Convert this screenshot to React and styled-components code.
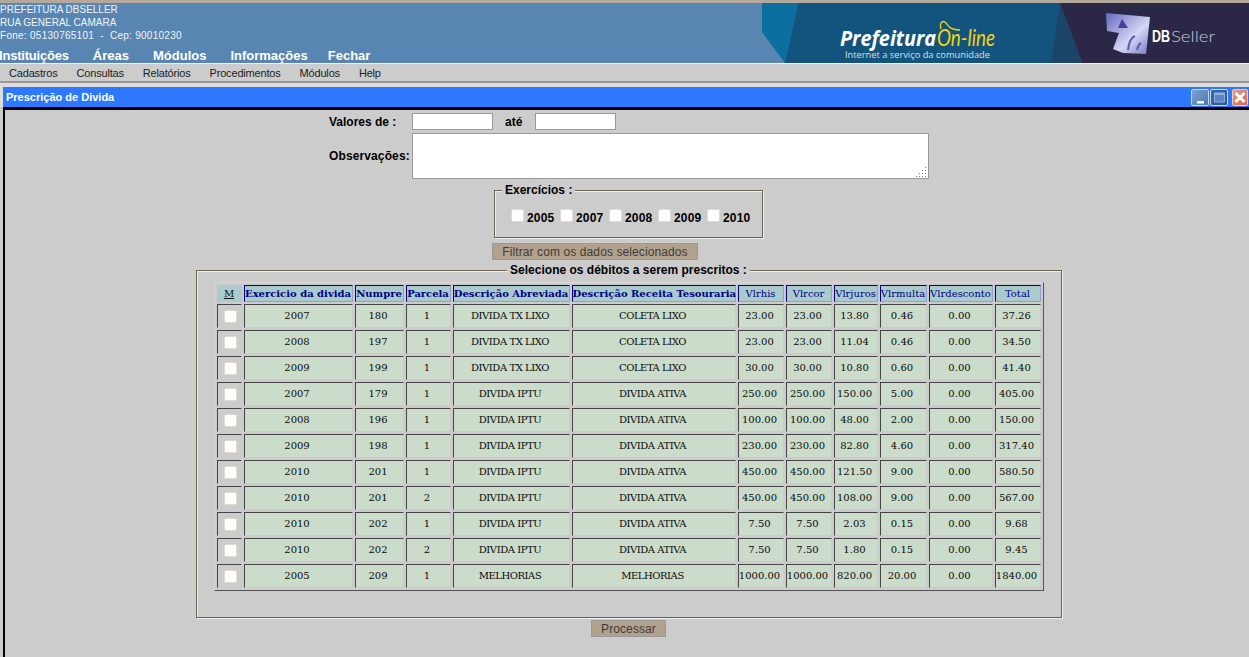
import React from "react";
import styled, { createGlobalStyle } from "styled-components";

const GlobalStyle = createGlobalStyle`
  html, body {
    margin: 0;
    height: 100%;
    overflow: hidden;
    background-color: #cccccc;
    font-family: "Liberation Sans", Arial, sans-serif;
  }
`;

const Page = styled.div`
  width: 1249px;
  height: 657px;
  overflow: hidden;
  display: flex;
  flex-direction: column;
`;

const Header = styled.header`
  height: 60px;
  flex: none;
  display: flex;
  justify-content: space-between;
  border-top: 3px solid #b3a89b;
  border-bottom: 1px solid #f2f2f2;
  background-color: #5885b1;
`;

const HeaderInfo = styled.div`
  display: flex;
  flex-direction: column;
  color: #f1f5f9;
  font-size: 10px;
  line-height: 13px;
  white-space: pre;
`;

const InfoLines = styled.div`
  height: 45px;
`;

const PhoneLine = styled.div`
  letter-spacing: 0.27px;
`;

const MainNav = styled.nav`
  display: flex;
  gap: 24px;
  margin-left: -1px;
  color: #ffffff;
  font-size: 13px;
  font-weight: bold;
  line-height: 15px;
`;

const MainItem = styled.span`
  letter-spacing: ${(p) => (p.$tight ? "-0.2px" : "0")};
  margin-left: ${(p) => (p.$pull ? "-4px" : "0")};
`;

const Banner = styled.svg`
  display: block;
  flex: none;
  width: 487px;
  height: 60px;
`;

const SubNav = styled.nav`
  height: 17px;
  flex: none;
  display: flex;
  gap: 19px;
  padding-left: 9px;
  align-items: center;
  font-size: 11px;
  letter-spacing: -0.18px;
  color: #1c1c1c;
  background-color: #cccccc;
  border-bottom: 2px solid #999999;
`;

const LightStrip = styled.div`
  height: 4px;
  flex: none;
  background-color: #dcdcdc;
`;

const Win = styled.section`
  flex: 1;
  min-height: 0;
  display: flex;
  flex-direction: column;
  padding-left: 3px;
  background: linear-gradient(#dcdcdc 0, #dcdcdc 20px, #cccccc 20px);
`;

const TitleBar = styled.div`
  height: 20px;
  flex: none;
  display: flex;
  align-items: center;
  justify-content: space-between;
  padding: 0 1px 0 3px;
  background-color: #2e78ff;
  color: #ffffff;
  font-size: 11px;
  font-weight: bold;
`;

const WinControls = styled.div`
  display: flex;
  gap: 1px;
`;

const WinControl = styled.span`
  box-sizing: border-box;
  width: ${(p) => (p.$kind === "close" ? 16 : 18)}px;
  height: 17px;
  margin-left: ${(p) => (p.$kind === "close" ? 3 : 0)}px;
  display: flex;
  align-items: center;
  justify-content: center;
  border: 1px solid ${(p) => (p.$kind === "close" ? "#f4c8b8" : "#c4d6f0")};
  border-radius: 2px;
  background: ${(p) =>
    p.$kind === "close"
      ? "linear-gradient(135deg, #e89a80, #d86a48)"
      : p.$kind === "max"
      ? "linear-gradient(135deg, #3a6cae, #2a5696)"
      : "linear-gradient(135deg, #7ea2d2, #4c78b0)"};
`;

const Panel = styled.div`
  flex: 1;
  width: 1247px;
  border-top: 3px solid #000000;
  border-left: 2px solid #000000;
  display: flex;
  flex-direction: column;
  align-items: center;
  background-color: #cccccc;
`;

const Form = styled.form`
  width: 601px;
  display: flex;
  flex-direction: column;
  padding-top: 3px;
`;

const FieldRow = styled.div`
  display: flex;
  align-items: center;
  margin-bottom: 3px;
`;

const FieldLabel = styled.label`
  box-sizing: border-box;
  width: ${(p) => p.$width}px;
  padding-left: ${(p) => p.$indent}px;
  flex: none;
  font-size: 12px;
  font-weight: bold;
  letter-spacing: ${(p) => (p.$spread ? "0.12px" : "0")};
  color: #000000;
`;

const TextField = styled.input`
  width: 81px;
  height: 17px;
  box-sizing: border-box;
  border: 1px solid #999999;
  background-color: #ffffff;
  padding: 0;
  margin: 0;
`;

const ObsWrap = styled.div`
  position: relative;
  width: 517px;
  height: 46px;
`;

const ObsArea = styled.textarea`
  display: block;
  width: 100%;
  height: 100%;
  box-sizing: border-box;
  border: 1px solid #999999;
  background-color: #ffffff;
  padding: 0;
  margin: 0;
  resize: none;
`;

const Grip = styled.svg`
  position: absolute;
  right: 2px;
  bottom: 2px;
  width: 11px;
  height: 11px;
`;

const Group = styled.fieldset`
  box-sizing: border-box;
  margin: ${(p) => p.$margin};
  width: ${(p) => p.$width}px;
  height: ${(p) => p.$height}px;
  border: 1px solid #6a6252;
  box-shadow: inset 1px 1px 0 #eeeeee, 1px 1px 0 #eeeeee;
  padding: 0;
`;

const GroupTitle = styled.legend`
  font-size: 12px;
  font-weight: bold;
  line-height: 15px;
  color: #000000;
  background-color: #cccccc;
  padding: 0 3px;
  margin: ${(p) => p.$margin};
`;

const YearRow = styled.div`
  display: flex;
  padding: 11px 0 0 16px;
`;

const YearItem = styled.label`
  width: 49px;
  display: flex;
  align-items: flex-end;
  font-size: 12px;
  font-weight: bold;
  line-height: 14px;
  letter-spacing: 0.2px;
  color: #000000;
`;

const Check = styled.input.attrs({ type: "checkbox" })`
  appearance: none;
  width: 13px;
  height: 13px;
  box-sizing: border-box;
  margin: 0;
  background-color: #ffffff;
  border: 1px solid #e0dcd2;
  border-radius: 2px;
`;

const YearCheck = styled(Check)`
  margin: 0 3px 3px 0;
`;

const ActionButton = styled.button`
  box-sizing: border-box;
  width: ${(p) => p.$width}px;
  height: 17px;
  flex: none;
  padding: 1px 0 0;
  border: 1px solid #999999;
  background-color: #b2a18c;
  color: #3d3d3d;
  font-family: "Liberation Sans", Arial, sans-serif;
  font-size: 12px;
  line-height: 14px;
  letter-spacing: 0.1px;
`;

const FilterButton = styled(ActionButton)`
  margin: 5px 0 0 164px;
`;

const DebtsBody = styled.div`
  padding: 4px 17px 0;
`;

const DebtTable = styled.table`
  table-layout: fixed;
  width: 830px;
  box-sizing: border-box;
  border-collapse: separate;
  border-spacing: 2px;
  border-style: solid;
  border-width: 1px;
  border-color: #d8d8d8 #555555 #555555 #d8d8d8;
  font-family: "DejaVu Serif", "Liberation Serif", serif;
  font-size: 10px;
`;

const HeadCell = styled.th`
  box-sizing: border-box;
  height: 17px;
  padding: 0;
  white-space: nowrap;
  text-align: center;
  background-color: #a9cbcd;
  color: ${(p) => (p.$mark ? "#111111" : "#000080")};
  font-weight: ${(p) => (p.$bold ? "bold" : "normal")};
  text-decoration: ${(p) => (p.$mark ? "underline" : "none")};
  border-style: solid;
  border-width: 1px;
  border-color: ${(p) =>
    p.$mark ? "#a9cbcd" : "#000080 #9a9ad6 #9a9ad6 #000080"};
`;

const DataCell = styled.td`
  box-sizing: border-box;
  height: 24px;
  padding: ${(p) => (p.$mark ? "0" : "0 2px 2px 0")};
  white-space: nowrap;
  text-align: center;
  color: #0a0a0a;
  letter-spacing: ${(p) => (p.$caps ? "-0.45px" : "0")};
  background-color: ${(p) => (p.$mark ? "#cccccc" : "#cbdccb")};
  border-style: solid;
  border-width: 1px;
  border-color: #444444 #cccccc #cccccc #444444;
`;

const MarkCheck = styled(Check)`
  display: block;
  margin: 0 0 0 6px;
`;

const ProcessButton = styled(ActionButton)`
  margin-top: 2px;
`;

const COLS = [25, 109, 49, 45, 117, 164, 46, 46, 44, 47, 64, 46];

const HEADS = [
  { label: "Exercicio da divida", bold: true },
  { label: "Numpre", bold: true },
  { label: "Parcela", bold: true },
  { label: "Descrição Abreviada", bold: true },
  { label: "Descrição Receita Tesouraria", bold: true },
  { label: "Vlrhis" },
  { label: "Vlrcor" },
  { label: "Vlrjuros" },
  { label: "Vlrmulta" },
  { label: "Vlrdesconto" },
  { label: "Total" },
];

const LIXO = ["DIVIDA TX LIXO", "COLETA LIXO"];
const IPTU = ["DIVIDA IPTU", "DIVIDA ATIVA"];
const MELH = ["MELHORIAS", "MELHORIAS"];

const ROWS = [
  ["2007", "180", "1", ...LIXO, "23.00", "23.00", "13.80", "0.46", "0.00", "37.26"],
  ["2008", "197", "1", ...LIXO, "23.00", "23.00", "11.04", "0.46", "0.00", "34.50"],
  ["2009", "199", "1", ...LIXO, "30.00", "30.00", "10.80", "0.60", "0.00", "41.40"],
  ["2007", "179", "1", ...IPTU, "250.00", "250.00", "150.00", "5.00", "0.00", "405.00"],
  ["2008", "196", "1", ...IPTU, "100.00", "100.00", "48.00", "2.00", "0.00", "150.00"],
  ["2009", "198", "1", ...IPTU, "230.00", "230.00", "82.80", "4.60", "0.00", "317.40"],
  ["2010", "201", "1", ...IPTU, "450.00", "450.00", "121.50", "9.00", "0.00", "580.50"],
  ["2010", "201", "2", ...IPTU, "450.00", "450.00", "108.00", "9.00", "0.00", "567.00"],
  ["2010", "202", "1", ...IPTU, "7.50", "7.50", "2.03", "0.15", "0.00", "9.68"],
  ["2010", "202", "2", ...IPTU, "7.50", "7.50", "1.80", "0.15", "0.00", "9.45"],
  ["2005", "209", "1", ...MELH, "1000.00", "1000.00", "820.00", "20.00", "0.00", "1840.00"],
];

const YEARS = ["2005", "2007", "2008", "2009", "2010"];

const BannerArt = () => (
  <Banner viewBox="762 3 487 60">
    <defs>
      <linearGradient id="cube" x1="0" y1="0" x2="1" y2="1">
        <stop offset="0" stopColor="#6466bc" />
        <stop offset="0.6" stopColor="#d5d7f4" />
        <stop offset="1" stopColor="#7478c4" />
      </linearGradient>
      <filter id="soft">
        <feGaussianBlur stdDeviation="0.7" />
      </filter>
    </defs>
    <polygon points="762,3 798,3 785,63 762,32" fill="#0a6f9f" />
    <polygon points="798,3 1060,3 1082,63 785,63" fill="#13547e" />
    <polygon points="1060,3 1082,63 1051,63" fill="#1a4468" />
    <polygon points="1060,3 1249,3 1249,63 1082,63" fill="#2a2846" />
    <text x="840" y="46" fill="#ffffff" fontFamily="'Open Sans', sans-serif" fontSize="21" fontWeight="bold" fontStyle="italic" textLength="96" lengthAdjust="spacingAndGlyphs">Prefeitura</text>
    <text x="937" y="46" fill="#f2d40a" fontFamily="Lato, sans-serif" fontSize="24" fontStyle="italic" textLength="58" lengthAdjust="spacingAndGlyphs">On-line</text>
    <path d="M941 29 C939 22 943 20 946 23 C949 27 951 30 960 30" fill="none" stroke="#f2d40a" strokeWidth="1.3" />
    <text x="845" y="58" fill="#d5e0e8" fontFamily="'Open Sans', sans-serif" fontSize="9.5" textLength="145" lengthAdjust="spacingAndGlyphs">Internet a serviço da comunidade</text>
    <g filter="url(#soft)">
      <path d="M1106 13 L1150 17 L1146 54 L1123 53 L1113 49 L1119 33 L1107 31 Z" fill="url(#cube)" />
      <path d="M1122 19 L1128 28 L1118 28 Z" fill="#4a3f96" />
      <path d="M1128 50 C1129 42 1132 37 1135 36 M1137 50 C1138 46 1139 44 1141 43" fill="none" stroke="#5a5aa8" strokeWidth="2" />
    </g>
    <text x="1152" y="42" fill="#ffffff" fontFamily="'Liberation Sans', sans-serif" fontSize="16" fontWeight="bold" textLength="18" lengthAdjust="spacingAndGlyphs">DB</text>
    <text x="1171" y="42" fill="#c9c9d6" fontFamily="Lato, sans-serif" fontSize="16" fontWeight="300" textLength="44" lengthAdjust="spacingAndGlyphs">Seller</text>
  </Banner>
);

const App = () => (
  <Page>
    <GlobalStyle />
    <Header>
      <HeaderInfo>
        <InfoLines>
          <div>PREFEITURA DBSELLER</div>
          <div>RUA GENERAL CAMARA</div>
          <PhoneLine>{"Fone: 05130765101  -  Cep: 90010230"}</PhoneLine>
        </InfoLines>
        <MainNav>
          <MainItem $tight>Instituições</MainItem>
          <MainItem>Áreas</MainItem>
          <MainItem>Módulos</MainItem>
          <MainItem>Informações</MainItem>
          <MainItem $pull>Fechar</MainItem>
        </MainNav>
      </HeaderInfo>
      <BannerArt />
    </Header>
    <SubNav>
      <span>Cadastros</span>
      <span>Consultas</span>
      <span>Relatórios</span>
      <span>Procedimentos</span>
      <span>Módulos</span>
      <span>Help</span>
    </SubNav>
    <LightStrip />
    <Win>
      <TitleBar>
        <span>Prescrição de Divida</span>
        <WinControls>
          <WinControl $kind="min">
            <svg width="15" height="15" viewBox="0 0 15 15">
              <rect x="4" y="11" width="7" height="2.5" fill="#ffffff" />
            </svg>
          </WinControl>
          <WinControl $kind="max">
            <svg width="15" height="15" viewBox="0 0 15 15">
              <rect x="2.5" y="3" width="10" height="9" fill="#5b86c2" stroke="#8fb0dc" />
              <rect x="2.5" y="3" width="10" height="2" fill="#8fb0dc" />
            </svg>
          </WinControl>
          <WinControl $kind="close">
            <svg width="14" height="15" viewBox="0 0 14 15">
              <path d="M2.5 3 L11.5 12 M11.5 3 L2.5 12" stroke="#ffffff" strokeWidth="3" />
            </svg>
          </WinControl>
        </WinControls>
      </TitleBar>
      <Panel>
        <Form>
          <FieldRow>
            <FieldLabel $width={84} $indent={1}>Valores de :</FieldLabel>
            <TextField />
            <FieldLabel $width={42} $indent={12}>até</FieldLabel>
            <TextField />
          </FieldRow>
          <FieldRow>
            <FieldLabel $width={84} $indent={1} $spread>Observações:</FieldLabel>
            <ObsWrap>
              <ObsArea />
              <Grip viewBox="0 0 11 11">
                <path
                  d="M9 1h1v1h-1z M6 4h1v1h-1z M9 4h1v1h-1z M3 7h1v1h-1z M6 7h1v1h-1z M9 7h1v1h-1z M0 10h1v1h-1z M3 10h1v1h-1z M6 10h1v1h-1z M9 10h1v1h-1z"
                  fill="#777777"
                />
              </Grip>
            </ObsWrap>
          </FieldRow>
          <Group $width={269} $height={55} $margin="1px 0 0 166px">
            <GroupTitle $margin="0 0 0 7px">Exercícios :</GroupTitle>
            <YearRow>
              {YEARS.map((year) => (
                <YearItem key={year}>
                  <YearCheck />
                  {year}
                </YearItem>
              ))}
            </YearRow>
          </Group>
          <FilterButton type="button" $width={206}>Filtrar com os dados selecionados</FilterButton>
        </Form>
        <Group $width={865} $height={355} $margin="3px 0 0 0">
          <GroupTitle $margin="0 auto">Selecione os débitos a serem prescritos :</GroupTitle>
          <DebtsBody>
            <DebtTable>
              <colgroup>
                {COLS.map((w, i) => (
                  <col key={i} style={{ width: w }} />
                ))}
              </colgroup>
              <thead>
                <tr>
                  <HeadCell $mark>M</HeadCell>
                  {HEADS.map((h) => (
                    <HeadCell key={h.label} $bold={h.bold}>{h.label}</HeadCell>
                  ))}
                </tr>
              </thead>
              <tbody>
                {ROWS.map((row, i) => (
                  <tr key={i}>
                    <DataCell $mark>
                      <MarkCheck />
                    </DataCell>
                    {row.map((value, j) => (
                      <DataCell key={j} $caps={j === 3 || j === 4}>{value}</DataCell>
                    ))}
                  </tr>
                ))}
              </tbody>
            </DebtTable>
          </DebtsBody>
        </Group>
        <ProcessButton type="button" $width={75}>Processar</ProcessButton>
      </Panel>
    </Win>
  </Page>
);

export default App;
